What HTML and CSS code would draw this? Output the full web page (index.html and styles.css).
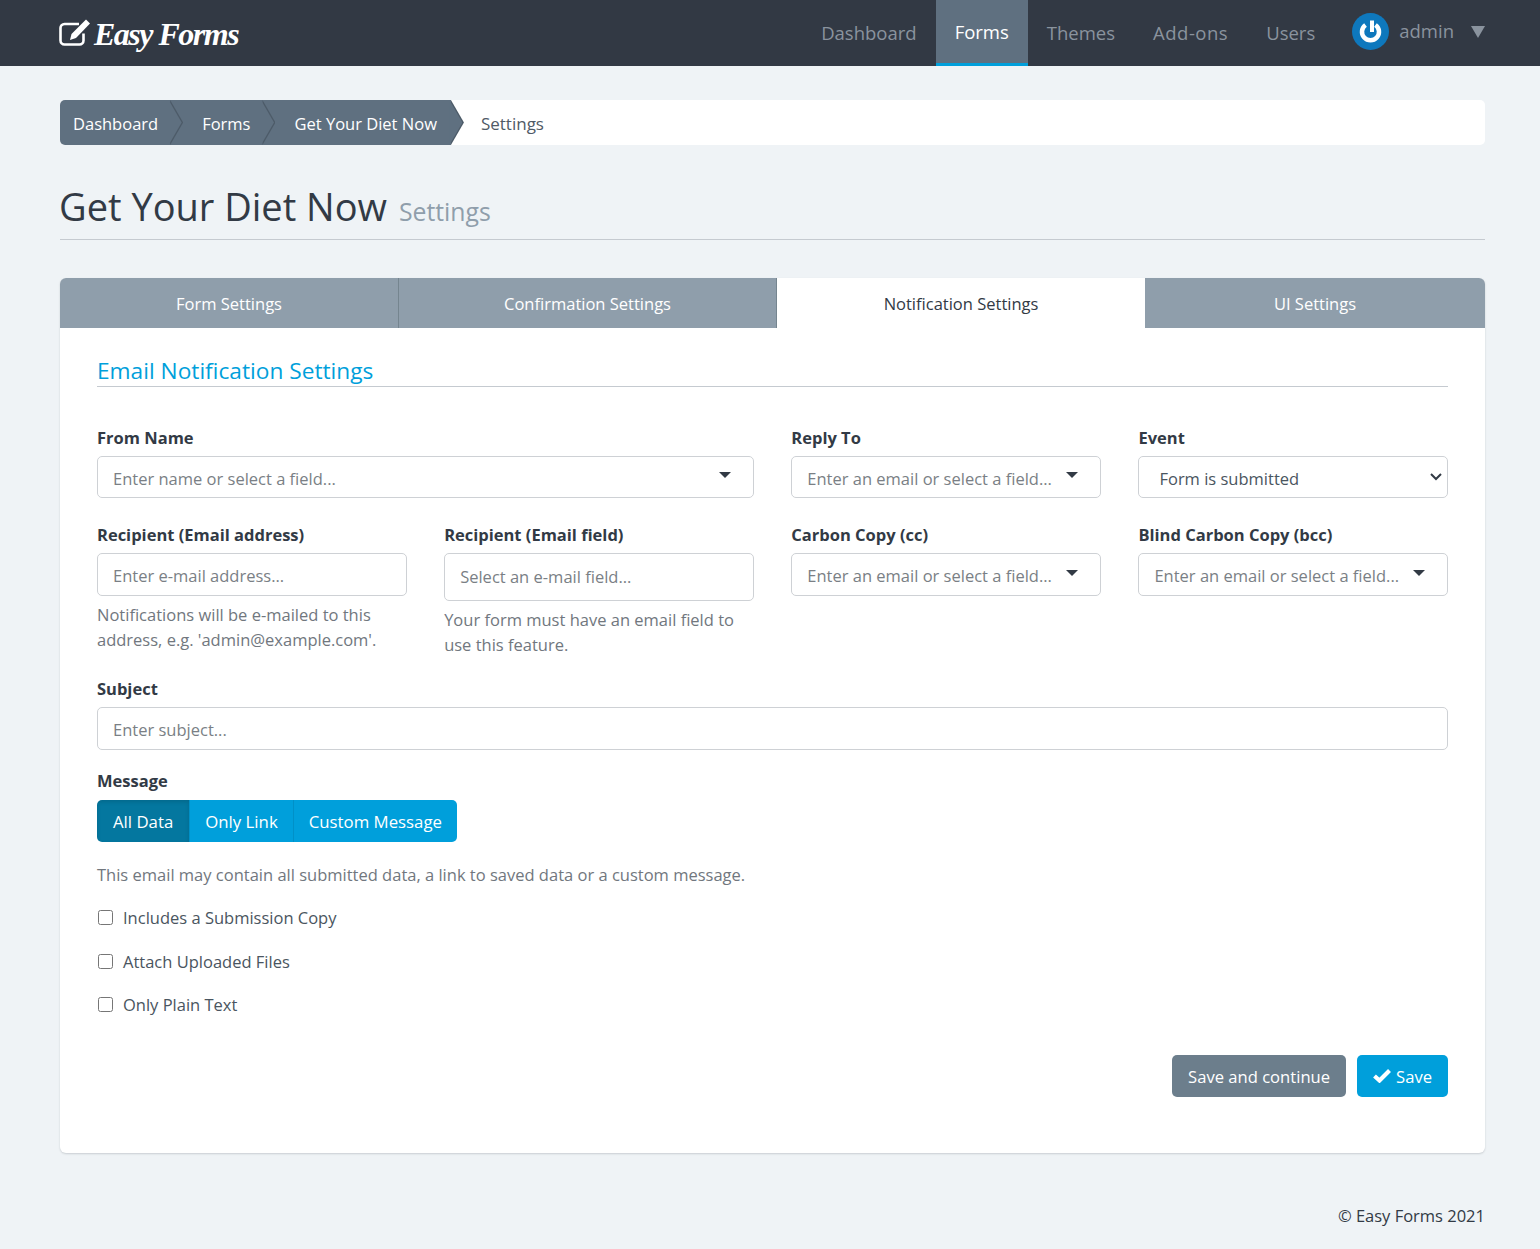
FILE: index.html
```html
<!DOCTYPE html>
<html lang="en">
<head>
  <meta charset="UTF-8" />
  <title>Easy Forms</title>
  <link rel="stylesheet" href="styles.css">
</head>
<body>

  <nav class="navbar">
    <a class="brand" href="#">
      <svg class="brand-icon" viewBox="0 0 32 28" width="32" height="28" aria-hidden="true">
        <path d="M20 5H5.500a4 4 0 0 0-4 4v12.500a4 4 0 0 0 4 4h15a4 4 0 0 0 4-4v-7" fill="none" stroke="#fff" stroke-width="2.600"/>
        <path d="M27 0.5l4 4-14 14.500-6 2 1.500-6z" fill="#fff" stroke="#323944" stroke-width="1.500" paint-order="stroke"/>
      </svg>
      <span class="brand-name">Easy Forms</span>
    </a>
    <div class="nav-links">
      <a class="nav-link" href="#">Dashboard</a>
      <a class="nav-link active" href="#">Forms</a>
      <a class="nav-link" href="#">Themes</a>
      <a class="nav-link nav-link-addons" href="#">Add-ons</a>
      <a class="nav-link" href="#">Users</a>
      <a class="nav-user" href="#">
        <svg viewBox="0 0 37 37" width="37" height="37" aria-hidden="true">
          <circle cx="18.500" cy="18.500" r="18.500" fill="#0e78bd"/>
          <path d="M13.500 12a8.500 8.500 0 1 0 10 0" fill="none" stroke="#fff" stroke-width="4.500"/>
          <path d="M20 7.500v11.500" stroke="#fff" stroke-width="4"/>
        </svg>
        <span class="user-name">admin</span>
        <span class="user-caret"></span>
      </a>
    </div>
  </nav>

  <main class="container">
    <ol class="breadcrumb">
      <li class="crumb crumb-first"><a href="#">Dashboard</a></li>
      <li class="crumb"><a href="#">Forms</a></li>
      <li class="crumb crumb-last"><a href="#">Get Your Diet Now</a></li>
      <li class="crumb-current">Settings</li>
    </ol>

    <div class="page-header">
      <h1>Get Your Diet Now <small>Settings</small></h1>
    </div>

    <section class="card">
      <div class="tabs">
        <a class="tab" href="#">Form Settings</a>
        <a class="tab" href="#">Confirmation Settings</a>
        <a class="tab active" href="#">Notification Settings</a>
        <a class="tab" href="#">UI Settings</a>
      </div>

      <div class="card-body">
        <h2 class="legend">Email Notification Settings</h2>

        <div class="form-row row-one">
          <div class="field span-2">
            <label>From Name</label>
            <div class="combo"><span class="combo-text">Enter name or select a field...</span><span class="caret"></span></div>
          </div>
          <div class="field">
            <label>Reply To</label>
            <div class="combo"><span class="combo-text">Enter an email or select a field...</span><span class="caret"></span></div>
          </div>
          <div class="field">
            <label for="event">Event</label>
            <select id="event" class="select"><option>Form is submitted</option></select>
          </div>
        </div>

        <div class="form-row row-two">
          <div class="field">
            <label for="recipient">Recipient (Email address)</label>
            <input id="recipient" class="input" type="text" placeholder="Enter e-mail address...">
            <p class="help">Notifications will be e-mailed to this address, e.g. 'admin@example.com'.</p>
          </div>
          <div class="field">
            <label>Recipient (Email field)</label>
            <div class="combo combo-tall"><span class="combo-text">Select an e-mail field...</span></div>
            <p class="help">Your form must have an email field to use this feature.</p>
          </div>
          <div class="field">
            <label>Carbon Copy (cc)</label>
            <div class="combo"><span class="combo-text">Enter an email or select a field...</span><span class="caret"></span></div>
          </div>
          <div class="field">
            <label>Blind Carbon Copy (bcc)</label>
            <div class="combo"><span class="combo-text">Enter an email or select a field...</span><span class="caret"></span></div>
          </div>
        </div>

        <div class="field">
          <label for="subject">Subject</label>
          <input id="subject" class="input input-subject" type="text" placeholder="Enter subject...">
        </div>

        <div class="field field-message">
          <label>Message</label>
          <div class="btn-group">
            <button class="btn-seg active" type="button">All Data</button>
            <button class="btn-seg" type="button">Only Link</button>
            <button class="btn-seg" type="button">Custom Message</button>
          </div>
          <p class="help help-message">This email may contain all submitted data, a link to saved data or a custom message.</p>
        </div>

        <label class="check"><input type="checkbox"> Includes a Submission Copy</label>
        <label class="check"><input type="checkbox"> Attach Uploaded Files</label>
        <label class="check"><input type="checkbox"> Only Plain Text</label>

        <div class="actions">
          <button class="btn btn-secondary" type="button">Save and continue</button>
          <button class="btn btn-primary" type="button">
            <svg viewBox="0 0 18 14" width="18" height="14" aria-hidden="true"><path d="M1.500 7l5 4.500 10-10" fill="none" stroke="#fff" stroke-width="4.200"/></svg>
            Save
          </button>
        </div>
      </div>
    </section>

    <footer class="footer">© Easy Forms 2021</footer>
  </main>

</body>
</html>
```

FILE: styles.css
```css
* {
  box-sizing: border-box;
}

body {
  margin: 0;
  background-color: #eff3f6;
  color: #323a45;
  font-family: "Open Sans", Arial, sans-serif;
  font-size: 16.500px;
}

a {
  color: inherit;
  text-decoration: none;
}

/* top bar */
.navbar {
  display: flex;
  justify-content: space-between;
  height: 66px;
  padding: 0 55px 0 59px;
  background-color: #323944;
}

.brand {
  display: flex;
  align-items: center;
  gap: 3px;
  color: #fff;
}

.brand-name {
  padding-top: 3px;
  font-family: "Liberation Serif", serif;
  font-size: 32px;
  font-style: italic;
  font-weight: bold;
  letter-spacing: -1.500px;
}

.nav-links {
  display: flex;
}

.nav-link {
  display: flex;
  align-items: center;
  padding: 0 19px 2px;
  color: #8a939e;
  font-size: 18.500px;
}

.nav-link-addons {
  letter-spacing: 0.500px;
}

.nav-link.active {
  padding-bottom: 0;
  background-color: #5f7080;
  border-bottom: 3px solid #009fdb;
  color: #fff;
}

.nav-user {
  display: flex;
  align-items: center;
  margin-left: 18px;
  padding-bottom: 3px;
  color: #8a939e;
  font-size: 18.500px;
}

.user-name {
  margin-left: 10px;
  padding-bottom: 3px;
}

.user-caret {
  margin-left: 17px;
  border-top: 12px solid #8a939e;
  border-left: 7.500px solid transparent;
  border-right: 7.500px solid transparent;
}

.container {
  padding: 34px 55px 0 60px;
}

/* breadcrumb */
.breadcrumb {
  display: flex;
  align-items: center;
  height: 45px;
  margin: 0;
  padding: 0;
  list-style: none;
  background-color: #fff;
  border-radius: 5px;
}

.crumb {
  position: relative;
  display: flex;
  align-items: center;
  height: 45px;
  padding: 2px 12px 0 32px;
  background-color: #5f7080;
  color: #fff;
}

.crumb-first {
  padding-left: 13px;
  border-radius: 5px 0 0 5px;
}

.crumb-last {
  padding-right: 14px;
}

.crumb::before,
.crumb::after {
  content: "";
  position: absolute;
  top: 0;
  width: 13px;
  height: 45px;
  clip-path: polygon(0 0, 100% 50%, 0 100%);
}

.crumb::before {
  left: 100%;
  z-index: 1;
  background-color: #4d5b68;
}

.crumb::after {
  left: calc(100% - 1.500px);
  z-index: 2;
  background-color: #5f7080;
}

.crumb-current {
  padding: 1px 0 0 30px;
  color: #4f5a66;
  font-size: 17px;
}

/* heading */
.page-header {
  height: 95px;
  border-bottom: 1px solid #c5cad0;
}

h1 {
  margin: 0 0 0 -1px;
  padding-top: 36px;
  font-size: 38px;
  font-weight: 400;
  line-height: 50px;
}

h1 small {
  margin-left: 2px;
  color: #8f9eab;
  font-size: 24.800px;
}

/* card and tabs */
.card {
  margin-top: 38px;
  background-color: #fff;
  border-radius: 6px;
  box-shadow: 0 1px 2px rgba(50, 58, 69, 0.2);
  overflow: hidden;
}

.tabs {
  display: grid;
  grid-template-columns: 339px 378px 368px 1fr;
  height: 50px;
  background-color: #8f9eab;
}

.tab {
  display: flex;
  align-items: center;
  justify-content: center;
  border-right: 1px solid #75858f;
  color: #fff;
}

.tab:last-child {
  border-right: 0;
}

.tab.active {
  background-color: #fff;
  border-right: 0;
  color: #323a45;
}

.card-body {
  height: 825px;
  padding: 25px 37px 0;
}

.legend {
  margin: 0;
  height: 34px;
  border-bottom: 1px solid #c5cad0;
  color: #009fdb;
  font-size: 22.700px;
  font-weight: 400;
  line-height: 36px;
}

/* form */
.form-row {
  display: grid;
  grid-template-columns: repeat(4, 1fr);
  column-gap: 37.600px;
}

.row-one {
  margin-top: 38px;
}

.row-two {
  height: 154px;
  margin-top: 24px;
}

.span-2 {
  grid-column: span 2;
}

.field label {
  display: block;
  height: 31px;
  font-weight: 700;
  line-height: 25px;
}

.combo,
.input,
.select {
  width: 100%;
  height: 42px;
  background-color: #fff;
  border: 1px solid #ced1d5;
  border-radius: 5px;
  font-family: inherit;
  font-size: inherit;
}

.row-two .combo,
.row-two .input,
.input-subject {
  height: 43px;
}

.combo {
  display: flex;
  align-items: center;
  justify-content: space-between;
  padding: 2px 22px 0 15px;
  color: #7a7f85;
}

.row-two .combo-tall {
  height: 48px;
  padding-bottom: 4px;
}

.combo-text {
  white-space: nowrap;
}

.caret {
  flex-shrink: 0;
  margin-bottom: 6px;
  border-top: 6px solid #323a45;
  border-left: 6.500px solid transparent;
  border-right: 6.500px solid transparent;
}

.input {
  padding: 2px 15px 0;
  color: #323a45;
}

.input::placeholder {
  color: #7a7f85;
  opacity: 1;
}

.select {
  padding: 2px 0 0 20px;
  color: #4a5560;
  appearance: none;
  background-image: url("data:image/svg+xml,%3Csvg xmlns='http://www.w3.org/2000/svg' width='12' height='8'%3E%3Cpath d='M1 1l5 5 5-5' fill='none' stroke='%23323a45' stroke-width='2'/%3E%3C/svg%3E");
  background-repeat: no-repeat;
  background-position: right 5px center;
}

.help {
  margin: 6px 0 0;
  color: #71777e;
  line-height: 25px;
}

.field-message {
  margin-top: 18px;
}

.field-message label {
  height: 32px;
}

.btn-group {
  display: inline-flex;
  height: 42px;
  border-radius: 5px;
  overflow: hidden;
}

.btn-seg {
  padding: 0 15px;
  background-color: #009fdb;
  border: 0;
  border-left: 1px solid #0090c7;
  color: #fff;
  font-family: inherit;
  font-size: 16.800px;
}

.btn-seg:first-child {
  padding: 0 16px;
  border-left: 0;
}

.btn-seg.active {
  background-color: #04779f;
  box-shadow: inset 0 2px 4px rgba(0, 0, 0, 0.12);
}

.help-message {
  margin-top: 20.500px;
  line-height: 24px;
}

.check {
  display: flex;
  align-items: center;
  gap: 10px;
  height: 25px;
  margin-top: 18.500px;
  color: #4a5560;
}

.check input {
  width: 15px;
  height: 15px;
  margin: 0 0 0 1px;
}

.actions {
  display: flex;
  justify-content: flex-end;
  gap: 11px;
  margin-top: 38px;
}

.btn {
  display: flex;
  align-items: center;
  height: 42px;
  padding: 0 16px;
  border: 0;
  border-radius: 5px;
  color: #fff;
  font-family: inherit;
  font-size: 16.600px;
}

.btn svg {
  margin-right: 5px;
}

.btn-secondary {
  background-color: #6c7e8c;
}

.btn-primary {
  background-color: #009fdb;
}

.footer {
  margin-top: 50px;
  text-align: right;
  line-height: 25px;
}
```
